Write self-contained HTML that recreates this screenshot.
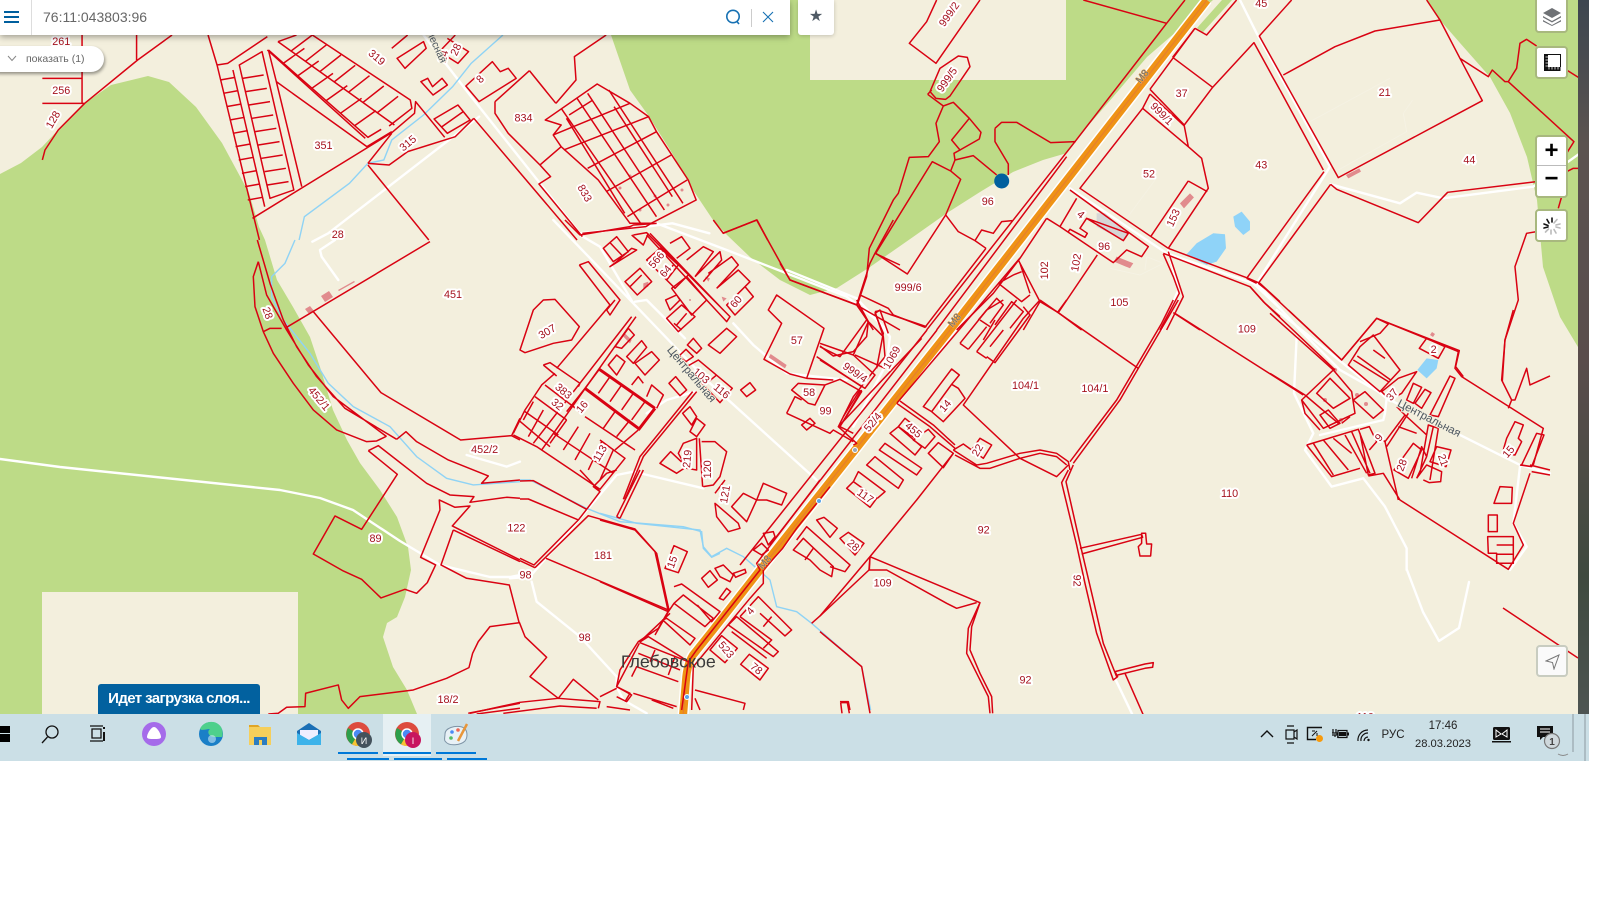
<!DOCTYPE html>
<html><head><meta charset="utf-8"><style>
html,body{margin:0;padding:0;background:#fff;width:1600px;height:900px;overflow:hidden}
svg{display:block;position:absolute;left:0;top:0}
.r path{vector-effect:non-scaling-stroke}
.r{fill:none;stroke:#d90212;stroke-width:1.5;stroke-linejoin:round}
.w path{vector-effect:non-scaling-stroke}
.w{fill:none;stroke:#fff;stroke-width:2.4;stroke-linejoin:round;stroke-linecap:round}
.b path{vector-effect:non-scaling-stroke}
.b{fill:none;stroke:#8fd3f5;stroke-width:1.4}
.t{stroke-width:3}
.l text{font:10.6px "Liberation Sans",sans-serif;fill:#a5121e;stroke:#fff;stroke-width:4px;stroke-linejoin:round;paint-order:stroke;text-anchor:middle}
.s text{font:11px "Liberation Sans",sans-serif;fill:#4b5560;stroke:#f3efdd;stroke-width:2px;paint-order:stroke;text-anchor:middle}
.btn{position:absolute;background:#fff;border:2px solid #a8b87e;box-sizing:border-box;border-radius:4px}
.ui{position:absolute;font-family:"Liberation Sans",sans-serif}
</style></head><body>
<svg width="1600" height="900" viewBox="0 0 1600 900" xmlns="http://www.w3.org/2000/svg">
<defs><clipPath id="c"><rect width="1578" height="714"/></clipPath>
<linearGradient id="sat" x1="0" y1="0" x2="0" y2="1"><stop offset="0" stop-color="#3d4650"/><stop offset=".2" stop-color="#5b5350"/><stop offset=".5" stop-color="#5a4d4c"/><stop offset=".8" stop-color="#3f4a3f"/><stop offset="1" stop-color="#4e5553"/></linearGradient></defs>
<rect x="1578" width="11" height="720" fill="url(#sat)"/>
<g clip-path="url(#c)">
<rect width="1578" height="714" fill="#f3efdd"/>
<g fill="#bddb87">
<path d="M0 174L21 163L42 147L58 130L85 103L111 85L148 76L169 82L196 107L222 143L249 193L259 227L265 240L277 280L293 307L310 337L320 367L333 410L347 440L360 463L380 490L397 517L408 547L411 570L405 597L397 617L387 623L383 637L393 667L407 690L417 714H0Z"/>
<path d="M611 0V35L630 90L648 115L672 153L693 190L713 220L727 235L750 257L780 280L810 295L837 288L870 267L913 237L947 213L980 192L1013 172L1043 160L1067 153L1087 127L1113 97L1147 57L1213 0Z"/>
<path d="M1427 0L1440 20L1460 43L1490 77L1510 113L1527 157L1537 200L1543 267L1560 317L1578 347V0Z"/>
<path d="M1197 28L1222 0H1232L1203 32Z"/>
</g>
<rect x="42" y="592" width="256" height="125" fill="#f3efdd"/>
<rect x="810" width="256" height="80" fill="#f3efdd"/>
<g class="w">
<path d="M0 459L60 467L280 490L320 498L353 510L400 541L440 565L490 577L510 577L520 575"/>
<path transform="translate(0,0) scale(.5294,.3333)" d="M800 105L890 290L1095 700M905 350L620 700L590 725M1095 700L1220 680L1270 670L1340 700"/>
<path transform="translate(0,240) scale(.3333)" d="M1005 0L960 30L965 50L1015 120M1400 645L1520 680L1560 665"/>
<path transform="translate(420,470) scale(.3333)" d="M270 325L330 320L480 145L590 15L640 5L850 55M335 335L350 395L480 500L590 620L590 650L610 690L680 730"/>
<path transform="translate(500,220) scale(.3333)" d="M160 0L400 250L630 490L950 780M240 45L300 80L400 250M470 10L680 90L1040 230L1130 300L1170 350L1160 430L1060 620M405 245L440 240L555 355M700 310L760 375L860 460L1040 480M585 515L500 540L440 580"/>
<path transform="translate(780,0) scale(.3333)" d="M870 565L1160 760L1420 850L1500 925M1165 750L1195 870L1145 990M20 810L230 895L290 960L320 990"/>
<path transform="translate(1100,0) scale(.3333)" d="M420 0L470 100L690 500L470 850L600 990L720 1110L880 1200M692 553L900 610L950 578L1030 595L1300 560L1440 460"/>
<path transform="translate(1270,310) scale(.3333)" d="M20 0L350 265L750 465L840 490M80 80L72 250L130 370L105 420L185 530L280 505L345 590L410 715L410 780M150 375L340 330M350 265L345 310L340 330M750 470L730 640L770 710L720 780"/>
<path d="M1407 570L1423 612L1439 641L1459 628L1469 582"/>
<path transform="translate(820,300) scale(.3333)" d="M885 1135L945 1260"/>
</g>
<g stroke="#fff" stroke-width=".7" fill="none" opacity=".9">
<path transform="translate(1100,0) scale(.3333)" d="M630 365L870 235M715 510L920 395L910 340L938 300"/>
<path transform="translate(780,0) scale(.3333)" d="M1040 655L1125 540M990 805L1080 825L1150 790L1100 770L1095 810"/>
</g>
<g fill="#8fd3f8">
<path transform="translate(1100,0) scale(.3333)" d="M258 765L290 730L340 700L375 703L378 745L350 785L320 795ZM400 650L425 635L450 665L450 690L430 705L405 680Z"/>
<path transform="translate(1270,310) scale(.3333)" d="M442 180L470 145L505 150L500 175L470 205Z"/>
</g>
<g class="b">
<path transform="scale(.5294,.3333)" d="M950 105L890 190L855 260L800 345L740 420L725 480L695 490L660 550L575 650L565 720"/>
<path transform="translate(0,240) scale(.3333)" d="M885 0L855 70L815 110L815 170L850 240L930 340L985 430L1060 500L1170 560L1250 650L1340 715L1420 735L1560 725"/>
<path transform="translate(420,470) scale(.3333)" d="M300 30L330 30L500 115L600 155L790 170L845 185L850 235L875 262L900 250"/>
<path transform="translate(600,480) scale(.3333)" d="M0 100L110 130L300 150L310 200L335 230L380 205L430 230L470 265L510 300L530 380L590 395L635 430L785 560L812 690"/>
</g>
<g fill="#e18b8d">
<path d="M305 309l5-3 4 5-5 3zM321 296l8-5 4 6-8 5zM338 290l16-9 1 1-16 9z"/>
<path transform="translate(780,0) scale(.3333)" d="M1200 610L1230 580L1242 592L1212 625ZM1010 770L1060 790L1050 805L1002 785Z"/>
<path transform="translate(1100,0) scale(.3333)" d="M738 525L778 505L783 515L745 535Z"/>
<path transform="translate(500,220) scale(.3333)" d="M812 402L860 435L855 445L806 412ZM375 340L395 360L390 370L370 350ZM430 190L445 185L445 200L430 205ZM615 170L630 175L625 185ZM665 230L680 235L670 245Z"/>
<circle cx="690" cy="300" r="1"/>
<path d="M1432 332l3 2-2 3-3-2z"/>
<circle cx="1325" cy="400" r="2"/><circle cx="1357" cy="395" r="2"/><circle cx="1335" cy="370" r="2"/><circle cx="1341" cy="420" r="2"/><circle cx="1366" cy="404" r="2"/>
<circle cx="620" cy="188" r="1.5"/><circle cx="630" cy="176" r="1.5"/><circle cx="655" cy="196" r="1.5"/><circle cx="668" cy="205" r="1.5"/><circle cx="682" cy="190" r="1.5"/><circle cx="640" cy="210" r="1.5"/>
</g>
<path transform="translate(780,0) scale(.3333)" d="M950 640L975 640L1045 700L1030 722L950 680Z" fill="#d6d6d6"/>
<g stroke-linecap="butt" fill="none">
<path d="M1207 0L950 330L760 570L713 630L693 655Q687 665 686 680L683 716" stroke="#fff" stroke-width="11"/>
<path d="M1207 0L950 330L760 570L713 630L693 655Q687 665 686 680L683 716" stroke="#ef9315" stroke-width="8"/>
<path d="M1207 0L950 330L760 570L713 630L693 655Q687 665 686 680L683 716" stroke="#dd6a4a" stroke-width="1" opacity=".6"/>
</g>

<!-- Z1 top-left -->
<g class="r" transform="scale(.5294,.3333)"><path d="M155 105V310M80 235H155M80 310H160M80 480L85 450L110 390L160 310L260 180L325 105M258 105V180"/>
<path d="M393 105L410 195L470 590L490 720M410 195L430 190L505 110M440 210L500 620M452 195L510 595L555 570L495 155ZM505 150L690 415M507 150L522 245L570 560"/>
<path d="M416 240l28-8M422 280l28-8M428 320l28-8M434 360l28-8M440 400l28-8M445 440l28-8M451 480l28-8M457 520l28-8M463 560l28-8M468 600l28-8M458 235l40-10M464 275l40-10M470 315l40-10M476 355l40-10M482 395l40-10M488 435l40-10M494 475l40-10M500 515l40-10M505 555l40-10"/>
<path d="M525 125L745 375M590 105L775 300L778 325L735 378M507 150L695 412L720 388M525 125L560 105M550 153l40-48M577 184l40-50M604 215l40-50M631 246l40-50M658 277l40-50M685 308l40-50M712 339l40-50M535 190l40-45M562 228l40-45M589 265l40-45M616 302l40-45M643 340l40-45M670 377l40-45"/>
<path d="M522 245L693 440L740 395M477 655L740 398L783 340L785 305L840 412M695 490L740 400M695 490L735 495L770 455L860 410L895 355M695 495L810 720M895 355L1090 720"/>
<path d="M740 145L770 105M750 175L800 125L805 145L765 205ZM845 115L885 155L865 190L830 155L860 105M795 245L818 285L845 255L835 235L817 260L808 235ZM880 258L930 185L945 215L960 205L975 235L905 305ZM820 357L865 315L888 360L845 400ZM835 380L875 335"/>
<path d="M1145 105L1085 170L1088 240L1050 310M1000 212L1050 310M935 305L1000 212M935 305L935 340L960 400L1020 495L1040 530L1018 552L1100 710M1020 495L1060 440"/>
<path d="M1030 360L1128 252L1190 310L1225 350L1240 395L1300 540L1315 600L1230 670L1190 670L1130 540L1060 440L1045 405L1060 375Z"/>
<path d="M1190 310L1045 405M1225 350L1065 450M1240 395L1110 505M1268 465L1145 575M1298 540L1185 650M1060 325L1210 670M1090 295L1240 650M1150 270L1290 610M1075 345L1120 300M1070 355L1180 640M1160 320L1270 590M1110 280L1255 630"/>
<path d="M1365 700L1430 660L1450 720M1100 700L1220 680L1230 670"/>
</g>
<!-- Z8 left -->
<g class="r" transform="translate(0,240) scale(.3333)">
<path d="M772 0L810 130L850 240L890 320L950 410L1035 505L1190 598M775 65L800 165L860 270L925 375L1000 470L1160 590M775 65L760 110L765 200L790 275L810 265L845 265M790 275L820 340L880 430L940 510L1010 570L1100 605L1130 603L1157 590"/>
<path d="M1190 598L1218 575L1250 605L1345 660L1465 708L1445 730L1560 720M860 262L1290 5M940 215L1143 458L1382 600L1535 587L1560 535M1535 587L1560 600"/>
<path d="M1105 632L1135 617L1280 730L1350 765L1422 770L1410 787L1520 772L1560 775M1105 632L1192 703L1085 868L1005 828L940 942L1030 993L1085 1018L1143 1074L1215 1048L1250 1060L1282 1028L1307 975L1262 952L1320 810L1318 780L1365 802L1410 798L1357 858L1560 960M1360 870L1560 965M1360 870L1323 975L1400 1015L1528 1035L1558 1150"/>
<path d="M1560 1148L1470 1160L1435 1205L1418 1240L1407 1283L1340 1315L1240 1350L1080 1370L1045 1405L1025 1380L1015 1335L917 1360L915 1400L860 1402L835 1420L805 1422M1405 1420L1560 1390M1430 1422L1560 1405"/>
</g>
<!-- Z12 -->
<g class="r" transform="translate(420,470) scale(.3333)">
<path d="M300 87L325 87L475 150L342 285L300 265M345 293L505 137L645 177L710 250L747 420M378 265L745 420M300 272L345 293"/>
<path d="M300 33L340 32L500 118L540 65L480 0M500 118L475 150M590 140L660 0M600 145L670 0M590 140L600 145"/>
<path d="M298 457L315 500L380 562L330 620L415 685L460 628L535 690M415 685L540 695L535 715M150 730L300 697L415 685M250 730L420 708L530 715M747 420L715 475L655 515L600 600L590 650L635 675L620 695L590 680"/>
<path d="M540 65L520 50L560 10L590 0"/>
</g>
<!-- Z5 center -->
<g class="r" transform="translate(500,220) scale(.3333)">
<path d="M195 0L240 45L390 20L400 15L470 10M238 135L265 125L360 240L330 285L320 270L345 240M238 135L330 255M60 390L100 270L130 240L165 238L238 320L215 360L160 370L75 398ZM170 445L330 255"/>
<path d="M310 85L350 50L385 95L340 125ZM330 140L410 90L395 85L350 125ZM375 185L420 145L455 185L412 225ZM390 200L425 165M330 68L365 105"/>
<path d="M400 45L440 38L690 290L680 305L440 45M450 40L670 270M395 45L430 75L445 40M440 120L480 85L535 135L500 180ZM495 165L520 135M500 180L525 205L565 165"/>
<path d="M510 70L545 50L570 85L530 115M560 120L610 80L640 95L585 170M585 170L660 95L665 120L610 185M625 160L695 110L715 135L650 205M650 205L715 150L750 185L680 255M680 255L735 200L760 230L705 285Z"/>
<path d="M515 205L560 170L620 240L575 285ZM497 240L530 225L540 240L510 270ZM500 295L545 255L585 290L535 335ZM522 310L545 330M560 280L530 315"/>
<path d="M625 375L680 325L710 350L660 400ZM562 375L580 355L605 385L590 400ZM537 408L558 388L580 410L558 425ZM560 440L595 420L697 505L660 548ZM620 490L650 465M507 490L527 470L560 510L540 527ZM722 510L750 488L767 510L740 530Z"/>
<path d="M395 290L100 670M408 290L125 690M40 640L75 570L125 495L165 460M135 495L240 575M105 530L200 600M75 575L175 645M55 600L150 680M40 645L110 680L300 808L375 715L300 660M130 435L150 428L240 490L235 500M130 435L170 468"/>
<path d="M200 600L150 670M235 620L190 690M270 640L225 720M305 665L265 750M340 690L300 780M160 640L340 760M100 545L70 600M130 570L85 650"/>
<path class="t" d="M298 448L465 565M255 505L415 625M465 565L415 630"/>
<path d="M255 505L298 448M330 470L295 520M365 495L330 545M400 520L365 570M435 545L395 600M345 380L385 325L403 345L365 385ZM380 410L425 362L440 382L400 430ZM405 430L455 395L478 420L435 465ZM325 435L350 405L375 425L350 465ZM395 495L415 470L430 490M440 530L455 495L490 525L470 565M345 690L415 630M200 575L255 505M255 590L405 690M310 625L345 575M350 650L390 600"/>
<path d="M590 515L430 710L375 838M578 515L420 710L370 838M535 700L550 670L590 655L590 750L560 745ZM598 655L608 800M605 665L645 665L680 695L660 770L640 795L610 800M480 730L512 695L560 740L530 760ZM548 580L570 560L590 590L575 615ZM570 635L590 595L615 615L590 650Z"/>
<path d="M875 510L895 490L975 495L945 555L925 550ZM860 580L885 530L905 540M860 580L990 640L1000 630L1060 665M975 495L1020 478L1085 515L1020 620L1060 640M1085 510L1020 620M1030 590L1080 510"/>
<path d="M805 270L830 225L972 325L920 475L870 462L792 418L845 310ZM920 475L1000 480M950 410L1085 500M960 380L1020 410L1100 300M905 615L920 630L945 610L930 595Z"/>
<path d="M640 0L670 40L770 0L870 180L1070 255L1110 130L1125 100L1180 0M1125 100L1200 135M1070 255L1200 330M1070 255L1105 305L1100 350L1060 395L1000 408L960 378M1125 280L1140 270L1165 340M1125 280L1150 340L1130 445"/>
</g>
<!-- Z6 -->
<g class="r" transform="translate(600,480) scale(.3333)">
<path d="M660 0L470 250L480 270L290 510L265 545L245 690M690 20L590 145L548 205L490 270L490 310L450 355L280 560L275 690"/>
<path d="M490 160L520 155L525 170L505 195ZM460 210L485 190L505 210L485 225ZM345 70L380 100L415 130L420 145L385 155L350 110ZM395 80L430 40L470 60L440 125ZM470 60L490 10L560 40L545 75L500 60ZM345 40L375 0"/>
<path d="M0 120L105 150L165 215L205 395M0 305L205 395M195 265L222 197L262 215L235 278ZM305 295L330 272L352 300L325 322ZM345 265L370 255L400 285L390 305L360 290ZM400 280L435 268L438 278L407 292ZM358 355L380 325L392 335L370 360Z"/>
<path d="M222 320L245 312L360 395L335 425L292 375M205 395L222 370L315 440L340 415M188 420L200 415L285 475L270 495ZM165 465L205 395M222 370L250 345L340 415M118 487L145 470L250 535M115 520L240 570M95 590L110 560L235 605M118 490L50 620L90 640L75 665M265 545L120 488M210 400L118 487M165 510L150 545M225 530L205 585M100 640L230 680M0 650L50 625M20 680L90 690M155 660L220 685"/>
<path d="M420 410L475 350L575 450L555 468L480 400M385 435L410 410L535 515L520 530ZM395 455L500 535M420 410L515 480L490 505M490 440L515 410M330 510L365 467L412 505L375 548ZM422 553L448 523L505 565L480 600Z"/>
<path d="M590 180L620 140L750 255L735 275L690 260M720 175L745 157L792 190L765 225ZM650 120L672 112L712 145L690 172ZM580 210L610 175L700 260L695 290L660 270L630 240ZM615 240L640 205M810 230L807 270L660 408L635 430"/>
<path d="M285 630L435 670L430 690M285 655L300 690M720 665H745L750 690"/>
</g>
<!-- Z9 -->
<g class="r" transform="translate(780,0) scale(.3333)">
<path d="M910 0L1160 70M1215 0L1160 70L885 425L440 990M860 470L470 990M1245 85L1280 105L1370 0M1245 85L1110 268M600 0L468 190L388 130L440 65L470 0"/>
<path d="M535 168L562 172L570 200L510 288L497 298L468 295L450 275L480 205ZM443 283L490 318L520 307L568 355L603 397L598 417L540 450L515 420L568 355M490 318L468 370L478 425L445 470L388 472L355 580L340 600L268 745L260 830L232 915M443 283L455 270"/>
<path d="M540 450L522 460L525 480L580 467L650 525M525 480L512 513L457 485L287 760L382 822L497 645L542 538L512 513M645 385L665 367L710 367L812 428L887 425M645 385L645 425L685 492L685 525M497 645L535 695L585 722L618 745M585 722L605 690L640 700L665 665L697 662M618 745L435 982L340 945L325 925L240 885M232 915L30 840L0 790M232 915L280 990"/>
<path d="M1178 172L1298 262L1213 375L1110 268M1298 262L1422 128L1500 270M1110 282L1088 325L1225 440M1110 282L1213 378L1225 440L1265 475L1285 565L1165 745M1088 325L900 565L1165 745M1225 543L1112 710M1225 543L1282 575M1178 172L1245 85"/>
<path d="M870 570L1105 740L1085 770L1040 750L1000 788L840 680L890 595M800 655L840 680M920 655L900 685L922 700L915 712L870 688L865 695M920 655L1045 700L1030 722Z"/>
<path d="M1150 762L1180 830L1198 880L1140 990M1165 755L1190 830L1210 890L1160 990M1165 745L1405 835L1440 850L1500 905M1150 760L1410 860L1450 905L1500 950"/>
<path d="M952 765L835 938M780 905L835 938L905 990M1180 938L1260 990M800 655L720 775L640 880L530 990M715 780L780 905L730 990M720 790L750 880M655 850L700 825M655 850L725 905L750 885M595 960L650 895L670 915L630 970M645 975L695 905L730 935L690 985M700 825L725 815"/>
</g>
<!-- Z10 -->
<g class="r" transform="translate(1100,0) scale(.3333)">
<path d="M540 270L670 510M575 0L478 108L715 533L1147 302L1080 175L1020 60L980 0M550 225L705 140L825 93L1020 60M1080 175L1165 230L1177 210L1215 245L1225 245L1250 205L1260 130L1280 118L1310 138M1400 210L1440 235M1225 245L1422 425L1400 460M1400 515L1420 505L1440 505"/>
<path d="M672 515L440 835M692 553L475 850M692 553L710 568L955 668L1043 577L1310 545M475 850L500 870L725 1080L830 955L1078 1052L1067 1100L1090 1130M1385 590L1375 625M1310 695L1280 700L1245 800L1255 900L1215 1020L1207 1145M450 860L495 910L705 1110M440 835L470 850"/>
</g>
<!-- Z11 -->
<g class="r" transform="translate(820,300) scale(.3333)">
<path d="M660 0L610 55L430 315L600 475L710 530L745 495M660 0L955 205M1065 40L1450 285M1075 0L1040 60L955 205L900 300L760 490M1060 0L1025 70L940 215L890 300L750 485"/>
<path d="M745 510L725 548L770 735L795 850L830 1000L880 1140L893 1130L885 1115L975 1092L1000 1088L998 1102L975 1105L893 1125M760 495L738 545L780 730L820 900L850 1030L890 1130M915 1120L970 1245"/>
<path d="M780 745L965 703L968 712L785 762M965 700H977L980 732H995L992 768H960L955 740L965 730Z"/>
<path d="M400 450L470 495L500 490L600 460L660 450L710 460L745 485L750 510M405 465L480 505L510 505L600 475L660 460L710 470L740 495M230 310L330 380L405 445M240 303L340 375L405 435M400 460L290 600L150 770L0 948M150 770L148 810L200 810L380 910L410 925L470 908M150 770L480 908L445 985L440 1060L470 1120L505 1190L510 1240M480 908L455 980L450 1050L480 1120L515 1190L518 1240M0 995L125 1100L150 1240M62 1208H82L88 1240M62 1208L66 1240"/>
<path d="M235 380L255 355L305 395L285 415ZM310 320L395 207L418 225L395 253L415 265L435 295L370 365L335 335ZM335 335L395 253M455 450L480 415L515 435L490 475ZM400 450L430 432L455 450M325 460L355 428L400 460L370 503ZM280 420L325 388L345 410L315 445ZM210 400L235 380L305 440L285 465ZM178 450L195 430L305 505L290 525ZM140 495L165 470L250 540L235 565ZM100 545L115 515L195 575L172 595M80 565L100 545L170 595L150 622Z"/>
<path d="M420 130L500 30L550 0M470 155L590 0M500 170L525 188L630 45L610 20M445 148L420 130M445 148L500 80M470 155L500 175M525 60L490 120M480 60L510 80M550 90L510 140M740 0L712 38"/>
<path d="M165 35L180 32L215 45L320 80M165 35L190 110L195 170L100 290L55 380M145 65L190 110M110 0L145 65L100 165L0 130M105 165L195 205M0 180L135 265L165 225L100 165M305 115L55 380L110 430L100 435"/>
</g>
<path class="r" d="M927 330L740 565M937 330L770 545"/>
<path class="r" d="M1020 258L897 403"/>
<!-- Z7 -->
<g class="r" transform="translate(1270,310) scale(.3333)">
<path d="M0 10L190 180L95 270L160 355L255 310L245 245L190 180M55 0L215 150L320 25L565 125L555 175L575 200L820 355L790 465M320 25L355 42L330 70L270 95M730 0L705 90L695 210L725 270L715 295M725 270L735 270L770 175L780 225L840 198M0 190L105 255"/>
<path d="M235 165L330 245L390 180L310 75L270 110ZM250 150L355 215M262 138L362 210M310 120L345 145M335 245L385 205L440 185L395 250L360 270ZM448 115L470 85L525 110L505 145ZM480 315L540 198L555 205L505 320ZM410 270L430 220L455 232L430 280ZM435 280L465 238L483 248L455 295Z"/>
<path d="M140 250L180 205L240 265L190 295ZM105 255L205 340M95 270L105 310L150 360M250 270L285 245L340 300L310 325ZM150 315L175 300L210 340L180 355ZM215 340L240 320"/>
<path d="M110 405L265 358L315 490L295 495L270 370M110 405L185 500L270 475M130 400L190 495M160 390L235 480M190 385L245 430M225 375L290 490M245 365L300 490M270 358L298 350L320 395L298 420"/>
<path d="M315 370L345 395L405 315L380 290M345 395L385 570M295 498L340 490L390 570L715 778L760 705L730 640L780 490M372 480L430 400L455 420L415 505ZM350 410L415 310M405 315L470 375M385 350L440 370M450 490L475 345L505 355L480 510M470 440L490 350M480 455L500 410L543 420L528 470ZM425 505L455 410L470 440L440 505M440 505L470 465L515 485L512 515L478 518L460 510"/>
<path d="M697 430L710 385L735 335L760 345L745 385L755 395L735 435ZM755 465L800 370L822 375L785 470ZM780 465L840 480M785 485L840 495M750 465L785 470"/>
<path d="M672 580L690 530L727 532L725 580ZM655 615H682V665H655ZM653 680H730V760H680V730H655ZM680 705H730M680 733H730"/>
</g>
<path class="r" d="M1503 608L1578 658"/>

<!-- labels -->
<g class="l" transform="scale(1.0204)">
<text x="60" y="44">261</text><text x="60" y="92">256</text><text transform="translate(55,119) rotate(-60)">128</text><text transform="translate(367,59) rotate(40)">319</text><text x="317" y="146">351</text><text transform="translate(402,143) rotate(-40)">315</text><text transform="translate(473,80) rotate(-45)">8</text><text x="513" y="119">834</text><text transform="translate(570,191) rotate(60)">833</text><text x="331" y="233">28</text><text x="444" y="292">451</text><text transform="translate(538,328) rotate(-30)">307</text><text transform="translate(259,308) rotate(70)">28</text><text transform="translate(310,393) rotate(50)">452/1</text><text x="475" y="444">452/2</text><text x="368" y="531">89</text><text x="506" y="521">122</text><text x="591" y="548">181</text><text x="515" y="567">98</text><text x="573" y="628">98</text><text x="439" y="689">18/2</text>
<text transform="translate(438,56) rotate(-75)">24</text><text transform="translate(450,50) rotate(-65)">28</text><text transform="translate(646,257) rotate(-50)">566</text><text transform="translate(655,268) rotate(-50)">64</text><text transform="translate(724,298) rotate(-50)">60</text><text x="781" y="337">57</text><text transform="translate(836,368) rotate(35)">999/4</text><text transform="translate(877,352) rotate(-60)">1069</text><text transform="translate(550,386) rotate(40)">383</text><text transform="translate(544,399) rotate(40)">32</text><text transform="translate(573,401) rotate(-50)">16</text><text transform="translate(591,446) rotate(-60)">113</text><text transform="translate(685,371) rotate(40)">103</text><text transform="translate(705,386) rotate(40)">116</text><text transform="translate(677,450) rotate(-85)">219</text><text transform="translate(697,460) rotate(-90)">120</text><text transform="translate(714,485) rotate(-80)">121</text><text x="793" y="388">58</text><text x="809" y="406">99</text><text transform="translate(858,416) rotate(-50)">52/4</text><text transform="translate(893,424) rotate(40)">455</text><text transform="translate(929,400) rotate(-50)">14</text><text transform="translate(961,443) rotate(-60)">22</text><text transform="translate(846,489) rotate(35)">117</text><text transform="translate(834,537) rotate(40)">28</text><text transform="translate(738,601) rotate(-50)">4</text><text transform="translate(709,639) rotate(50)">523</text><text transform="translate(739,658) rotate(40)">78</text><text transform="translate(662,552) rotate(-70)">15</text>
<text x="865" y="575">109</text><text x="964" y="523">92</text><text x="1005" y="670">92</text><text transform="translate(1052,569) rotate(90)">92</text><text x="1205" y="487">110</text><text x="1222" y="326">109</text><text x="1005" y="381">104/1</text><text x="1073" y="384">104/1</text><text x="1097" y="300">105</text><text transform="translate(1027,265) rotate(-90)">102</text><text transform="translate(1058,258) rotate(-80)">102</text><text transform="translate(1057,213) rotate(40)">4</text><text x="1082" y="245">96</text><text x="968" y="201">96</text><text x="890" y="285">999/6</text><text x="1126" y="174">52</text><text transform="translate(1153,215) rotate(-65)">153</text><text x="1236" y="165">43</text><text x="1158" y="95">37</text><text transform="translate(1136,114) rotate(45)">999/1</text><text x="1357" y="94">21</text><text x="1440" y="160">44</text><text x="1236" y="7">45</text><text transform="translate(933,16) rotate(-55)">999/2</text><text transform="translate(931,80) rotate(-55)">999/5</text><text x="1405" y="346">2</text><text transform="translate(1367,389) rotate(-50)">37</text><text transform="translate(1354,431) rotate(-50)">9</text><text transform="translate(1377,457) rotate(-70)">28</text><text transform="translate(1411,452) rotate(70)">21</text><text transform="translate(1481,445) rotate(-50)">15</text><text x="1338" y="706">110</text>
</g>
<g class="s" transform="scale(1.0204)">
<text transform="translate(1399,413) rotate(27)">Центральная</text>
<text transform="translate(675,369) rotate(50)">Центральная</text>
<text transform="translate(425,47) rotate(65)" style="font-size:10px">Лесная</text>
<text transform="translate(752,553) rotate(-50)" style="font-size:10px;fill:#6e6e6e;stroke:#f0b060;stroke-width:1px">М8</text>
<text transform="translate(938,316) rotate(-50)" style="font-size:10px;fill:#6e6e6e;stroke:#f0b060;stroke-width:1px">М8</text>
<text transform="translate(1122,77) rotate(-50)" style="font-size:10px;fill:#6e6e6e;stroke:#f0b060;stroke-width:1px">М8</text>
<text x="655" y="654" style="font-size:17.5px;fill:#3a3a3a;stroke:none">Глебовское</text>
</g>
<g fill="#5aa6e8" stroke="#fff" stroke-width="1"><circle cx="855" cy="450" r="2.5" fill="#9ab"/><circle cx="819" cy="501" r="2.5"/><circle cx="687" cy="697" r="2.5"/></g>
<circle cx="1001.7" cy="181" r="7.5" fill="#005f9e"/>
</g>

<!-- taskbar -->
<rect y="714" width="1589" height="47" fill="#cbdfe6"/>
<rect x="383" y="714" width="48" height="42" fill="#e6f0f3"/>
<g fill="#0078d7"><rect x="338" y="752" width="40" height="2"/><rect x="383" y="752" width="48" height="2"/><rect x="436" y="752" width="40" height="2"/><rect x="347" y="758" width="42" height="2"/><rect x="394" y="758" width="48" height="2"/><rect x="447" y="758" width="40" height="2"/></g>
<g fill="#000"><rect x="0" y="726" width="10" height="7"/><rect x="0" y="734" width="10" height="8"/></g>
<g fill="none" stroke="#111" stroke-width="1.3"><circle cx="52" cy="732" r="6"/><path d="M47.500 737L42 743"/></g>
<g fill="none" stroke="#111" stroke-width="1.3"><path d="M90 726h13M90 741h13M92 729h9v9h-9z"/><path d="M104 727v2M104 732v9" stroke-width="2"/></g>
<circle cx="154" cy="734" r="12" fill="#a56bea"/><path d="M154 727c3 0 7 7 7 10 0 2-3 2-7 2s-7 0-7-2c0-3 4-10 7-10z" fill="#fff"/>
<circle cx="211" cy="734" r="12" fill="#1a7fc7"/><path d="M200 729c3-8 16-10 21-2 2 4 2 8 1 10l-9 0c-5-1-6-6-3-8-4 0-8 2-10 0z" fill="#4ed08c"/><circle cx="212" cy="739" r="4" fill="#c9e6f5" opacity=".6"/>
<path d="M249 725h9l2 2h11v18h-22z" fill="#f6cf5b"/><path d="M249 725h9l2 2h-11z" fill="#e0a526"/><rect x="254" y="737" width="13" height="8" fill="#2b7cc1"/><rect x="259" y="740" width="3" height="5" fill="#f6cf5b"/>
<path d="M297 731L309 723L321 731V745H297Z" fill="#1b6fb5"/><path d="M300 730H318V735L309 740L300 735Z" fill="#eef"/><path d="M297 745V733L309 740L321 733V745Z" fill="#3db3ea"/>
<g id="ch"><circle cx="358" cy="734" r="12" fill="#dd4b3e"/><path d="M358 734L348 728A12 12 0 0 0 352 744.4Z" fill="#2d9f4b"/><path d="M358 734L352 744.4A12 12 0 0 0 370 734Z" fill="#f7c531"/><circle cx="358" cy="734" r="5" fill="#4a8af4" stroke="#fff" stroke-width="1.5"/></g>
<circle cx="364" cy="740" r="8" fill="#44525c"/><text x="364" y="744" font-family="Liberation Sans" font-size="9" fill="#fff" text-anchor="middle">И</text>
<use href="#ch" x="49"/>
<circle cx="413" cy="740" r="8" fill="#c8155f"/><text x="413" y="744" font-family="Liberation Sans" font-size="9" fill="#fff" text-anchor="middle">I</text>
<path d="M445 734c0-6 10-9 17-7 6 2 6 10 3 14-4 4-16 6-20 0-1-2 0-4 0-7z" fill="#e8f1f6" stroke="#7d93a5"/><circle cx="452" cy="732" r="1.800" fill="#4a8af4"/><circle cx="458" cy="730" r="1.800" fill="#e65"/><circle cx="451" cy="738" r="1.800" fill="#5b6"/><path d="M467 724L458 741" stroke="#e8963a" stroke-width="2.5"/>
<g fill="none" stroke="#111" stroke-width="1.2">
<path d="M1261 737L1267 731L1273 737" stroke-width="1.4"/>
<path d="M1286 730h8v9h-8zM1294 732l3-2v9l-3-2M1287 726h7M1287 743h7"/>
<path d="M1322 727.500H1307.500V739.500H1316" stroke-width="1.4"/>
<path d="M1312 736l5-5M1312 731h3M1317 733v3" stroke-width="1"/>
<path d="M1333 729v4M1336 729v4M1332 733h5v2h-5M1335 735v2M1337 737h1"/>
<path d="M1338 730.500h9v7h-9z"/>
<path d="M1358 741a10 10 0 0 1 10-11M1361 741a7 7 0 0 1 7-8M1364 741a4 4 0 0 1 4-4"/>
</g>
<rect x="1339" y="732" width="7" height="4" fill="#111"/><rect x="1347.500" y="732.500" width="1.500" height="3" fill="#111"/>
<circle cx="1368.500" cy="740" r="1.200" fill="#111"/>
<circle cx="1319.500" cy="738.500" r="3.500" fill="#f79a0c"/>
<g font-family="Liberation Sans" font-size="11.500" fill="#222" text-anchor="middle"><text x="1393" y="738">РУС</text><text x="1443" y="729">17:46</text><text x="1443" y="747" font-size="11.2">28.03.2023</text></g>
<rect x="1493" y="727" width="17" height="13" rx="1.500" fill="#111"/><path d="M1496 730l5 4-5 3zM1507 730l-5 4 5 3z" fill="none" stroke="#fff"/><rect x="1492" y="741" width="19" height="1.500" fill="#111"/>
<path d="M1537 726h16v11h-10l-3 3v-3h-3z" fill="#111"/><path d="M1540 729h10M1540 732h10" stroke="#fff"/>
<circle cx="1552" cy="741" r="7.500" fill="#cfd8dc" stroke="#777" stroke-width="1.200"/><text x="1552" y="745" font-family="Liberation Sans" font-size="10" font-weight="bold" fill="#444" text-anchor="middle">1</text>
<path d="M1558 754q5 3 10 0" fill="none" stroke="#888"/>
<path d="M1573 714v38M1585 714v47" stroke="#8c9aa0"/>
</svg>

<!-- UI overlays -->
<div class="ui" style="left:98px;top:684px;width:162px;height:30px;background:#02619f;border-radius:3px 3px 0 0;color:#fff;font-weight:bold;font-size:15px;line-height:30px;text-align:center;letter-spacing:-.6px">Идет загрузка слоя...</div>

<div class="ui" style="left:0;top:0;width:790px;height:35px;background:#fff;box-shadow:0 2px 6px rgba(0,0,0,.35);color:#666;font-size:14px;line-height:34px">
<div style="position:absolute;left:31px;top:0;width:1px;height:35px;background:#ddd"></div>
<div style="position:absolute;left:4px;top:11px;width:15px;height:2px;background:#005f9e;box-shadow:0 5px 0 #005f9e,0 10px 0 #005f9e"></div>
<span style="position:absolute;left:43px;top:0">76:11:043803:96</span>
<svg style="left:724px;top:8px" width="18" height="18" viewBox="0 0 18 18" fill="none" stroke="#1771b3" stroke-width="1.6"><circle cx="9" cy="8.500" r="6.200"/><path d="M12.500 13L15 16"/></svg>
<div style="position:absolute;left:751px;top:9px;width:1px;height:18px;background:#ccc"></div>
<svg style="left:762px;top:11px" width="12" height="12" viewBox="0 0 12 12" stroke="#1771b3" stroke-width="1.1"><path d="M1 1L11 11M11 1L1 11"/></svg>
</div>
<div class="ui" style="left:798px;top:0;width:36px;height:35px;background:#fff;border-radius:0 0 3px 3px;box-shadow:0 1px 4px rgba(0,0,0,.2);color:#4f5a65;font-size:16px;line-height:34px;text-align:center">★</div>
<div class="ui" style="left:-14px;top:46px;width:118px;height:26px;background:#fff;border-radius:13px;box-shadow:1px 2px 3px rgba(0,0,0,.4);color:#666;font-size:10.5px;line-height:26px">
<svg style="left:21px;top:9px" width="10" height="7" viewBox="0 0 10 7" fill="none" stroke="#888"><path d="M1 1L5 5.500L9 1"/></svg>
<span style="position:absolute;left:40px;top:0">показать (1)</span></div>

<div class="btn" style="left:1535px;top:-4px;width:33px;height:37px"><svg style="left:5px;top:10px" width="20" height="18" viewBox="0 0 20 18" fill="#6f7276"><path d="M10 0L19 5L10 10L1 5Z"/><path d="M1 8L10 13L19 8L19 9.500L10 14.500L1 9.500Z"/><path d="M1 12L10 17L19 12L19 13.500L10 18L1 13.500Z"/></svg></div>
<div class="btn" style="left:1535px;top:46px;width:33px;height:33px"><svg style="left:7px;top:6px" width="17" height="17" viewBox="0 0 17 17"><path d="M0 0H4V13H16.500V17H0Z" fill="#111"/><path d="M4 .5H16.500V13" fill="none" stroke="#111"/><path d="M1.500 3H4M1.500 6H4M1.500 9H4M1.500 12H4M5 15.500V13M8 15.500V13M11 15.500V13M14 15.500V13" stroke="#fff" stroke-width=".8"/></svg></div>
<div class="btn" style="left:1535px;top:135px;width:33px;height:63px;color:#000;text-align:center;font:bold 24px/28px 'Liberation Sans',sans-serif"><div style="height:28px;border-bottom:1px solid #bbb">+</div><div style="line-height:26px">−</div></div>
<div class="btn" style="left:1535px;top:209px;width:33px;height:33px"><svg style="left:5px;top:5px" width="20" height="20" viewBox="0 0 20 20" stroke-width="1.6" stroke-linecap="round"><g stroke="#111"><path d="M10 2v4M5 3.500l2 3.500M2 8l4 1.500M2 12l4-1"/></g><g stroke="#bbb"><path d="M3.500 16l3-3M9 18v-4M14 17l-2-3.500M18 12l-4-1M18 8l-4 1M15 3.500l-3 3.500"/></g></svg></div>
<div class="btn" style="left:1536px;top:645px;width:32px;height:32px;background:#fafafa;border-color:#c8ccc0"><svg style="left:7px;top:7px" width="16" height="16" viewBox="0 0 16 16" fill="none" stroke="#777" stroke-width="1"><path d="M14 1L1 7L7.500 8.500L9 15Z"/></svg></div>
</body></html>
